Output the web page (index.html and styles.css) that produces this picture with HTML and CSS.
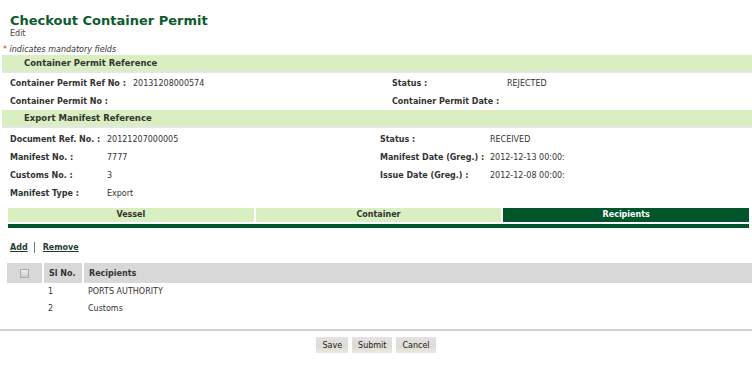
FILE: index.html
```html
<!DOCTYPE html>
<html lang="en">
<head>
    <meta charset="UTF-8">
    <title>Checkout Container Permit</title>
    <link rel="stylesheet" href="styles.css">
</head>
<body>

<div class="page-head">
    <h1>Checkout Container Permit</h1>
    <div class="mode">Edit</div>
</div>
<div class="mandatory"><span class="star">*</span> indicates mandatory fields</div>

<div class="section-bar">Container Permit Reference</div>
<div class="fields permit">
    <div class="label">Container Permit Ref No :</div>
    <div class="value">20131208000574</div>
    <div class="label">Status :</div>
    <div class="value">REJECTED</div>
    <div class="label">Container Permit No :</div>
    <div class="value"></div>
    <div class="label">Container Permit Date :</div>
    <div class="value"></div>
</div>

<div class="section-bar">Export Manifest Reference</div>
<div class="fields manifest">
    <div class="label">Document Ref. No. :</div>
    <div class="value">20121207000005</div>
    <div class="label">Status :</div>
    <div class="value">RECEIVED</div>
    <div class="label">Manifest No. :</div>
    <div class="value">7777</div>
    <div class="label">Manifest Date (Greg.) :</div>
    <div class="value">2012-12-13 00:00:</div>
    <div class="label">Customs No. :</div>
    <div class="value">3</div>
    <div class="label">Issue Date (Greg.) :</div>
    <div class="value">2012-12-08 00:00:</div>
    <div class="label">Manifest Type :</div>
    <div class="value">Export</div>
</div>

<div class="tabs">
    <div class="tab">Vessel</div>
    <div class="tab">Container</div>
    <div class="tab active">Recipients</div>
</div>

<div class="actions">
    <a href="#">Add</a>
    <span class="sep"></span>
    <a href="#">Remove</a>
</div>

<table class="grid">
    <thead>
        <tr>
            <th class="check"><span class="box"></span></th>
            <th class="num">Sl No.</th>
            <th>Recipients</th>
        </tr>
    </thead>
    <tbody>
        <tr><td></td><td class="num">1</td><td>PORTS AUTHORITY</td></tr>
        <tr><td></td><td class="num">2</td><td>Customs</td></tr>
    </tbody>
</table>

<div class="buttons">
    <button>Save</button>
    <button>Submit</button>
    <button>Cancel</button>
</div>

</body>
</html>
```

FILE: styles.css
```css
/* Base */
body {
    margin: 0;
    font-family: "DejaVu Sans", Verdana, sans-serif;
    font-size: 8px;
    color: #333;
    background: #fff;
}
.page-head {
    padding: 13px 10px 0;
}
h1 {
    margin: 0;
    font-size: 13px;
    line-height: 16px;
    color: #0d5a2c;
}
.mode {
    font-size: 8px;
    line-height: 10px;
    color: #444;
}
.mandatory {
    margin-top: 5px;
    padding-left: 3px;
    font-style: italic;
    line-height: 11px;
    color: #333;
}
.star {
    color: #e0302a;
    font-style: normal;
}

/* Section headers */
.section-bar {
    margin-left: 2px;
    height: 16px;
    line-height: 16px;
    padding-left: 22px;
    background: #d9efc1;
    border-bottom: 2px solid #e6e6e6;
    font-weight: bold;
    font-size: 8.5px;
    color: #333;
}
.fields {
    display: grid;
    padding-left: 10px;
    grid-auto-rows: 18px;
    align-items: center;
}
.fields.permit {
    grid-template-columns: 123px 259px 115px 1fr;
    padding-top: 1px;
}
.fields.manifest {
    grid-template-columns: 97px 273px 110px 1fr;
    padding-top: 2px;
    margin-bottom: 6px;
}
.label {
    font-weight: bold;
}

/* Tabs */
.tabs {
    display: flex;
    gap: 2px;
    margin: 0 3px 0 8px;
    border-bottom: 4px solid #00552b;
    padding-bottom: 2px;
}
.tab {
    flex: 1;
    height: 14px;
    line-height: 14px;
    text-align: center;
    background: #d9efc1;
    font-weight: bold;
    color: #333;
}
.tab.active {
    background: #00552b;
    color: #fff;
}

/* Add / Remove */
.actions {
    display: flex;
    align-items: center;
    padding: 13px 0 0 10px;
    height: 12px;
}
.actions a {
    font-weight: bold;
    color: #1f3d33;
}
.sep {
    width: 1px;
    height: 11px;
    background: #5b7b9b;
    margin: 0 8px 0 6px;
}

/* Recipients table */
.grid {
    margin: 10px 0 0 7px;
    width: calc(100% - 7px);
    border-collapse: collapse;
}
.grid th {
    background: #d8d8d8;
    height: 20px;
    padding: 0 5px;
    text-align: left;
    font-weight: bold;
    border-left: 2px solid #fff;
}
.grid th:first-child {
    border-left: none;
}
.grid td {
    height: 17px;
    padding: 0 5px;
}
.grid .check {
    width: 25px;
    text-align: center;
}
.grid .num {
    width: 28px;
}
.box {
    display: inline-block;
    width: 7px;
    height: 7px;
    border: 1px solid #aaa;
    background: linear-gradient(#eee, #ccc);
    vertical-align: middle;
}

/* Buttons */
.buttons {
    margin-top: 12px;
    border-top: 2px solid #cfcfcf;
    padding-top: 6px;
    display: flex;
    justify-content: center;
    gap: 4px;
}
button {
    font-family: inherit;
    font-size: 8px;
    color: #222;
    height: 16px;
    padding: 0 6px;
    border: none;
    background: linear-gradient(#e6e0e4, #dcdcd4 60%, #e8ecde);
}
```
